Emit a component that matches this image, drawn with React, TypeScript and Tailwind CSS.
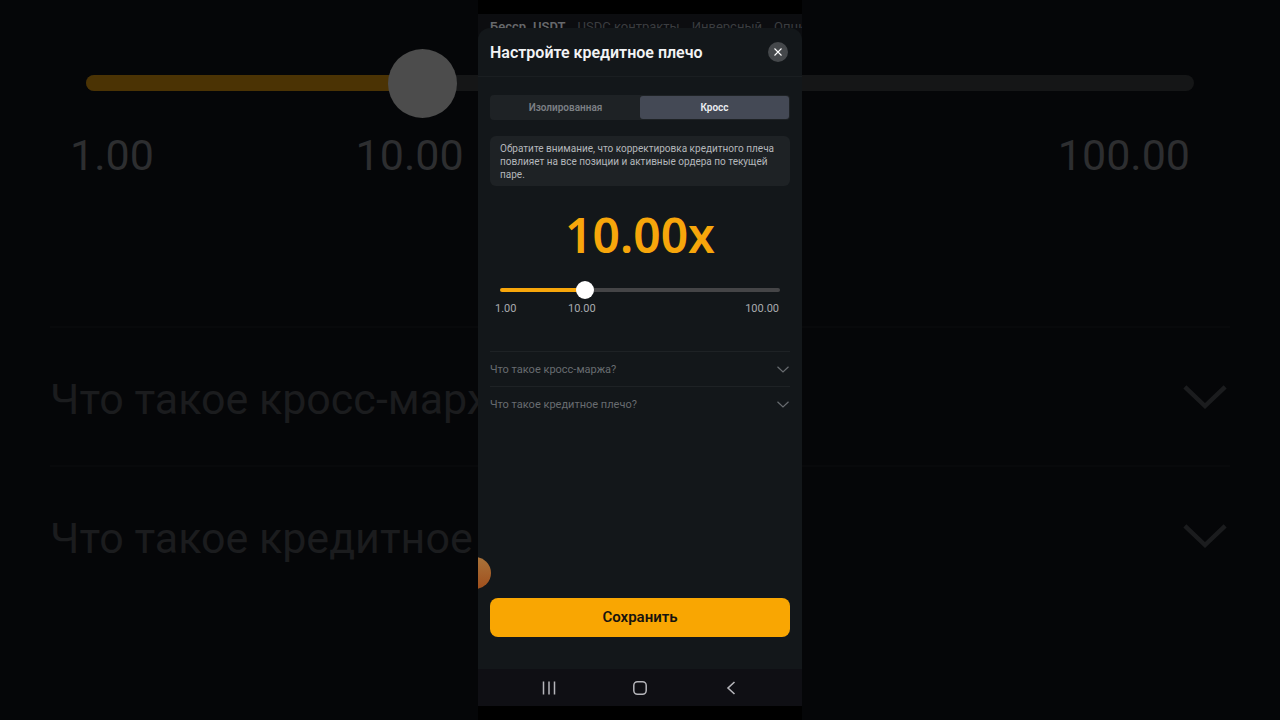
import { useState } from "react";

const FAQ = ["Что такое кросс-маржа?", "Что такое кредитное плечо?"];
const TABS = ["USDC контракты", "Инверсный", "Опционы"];
const THUMB = 18;

function Chevron({ className }: { className: string }) {
  return (
    <svg viewBox="0 0 12 7" fill="none" stroke="currentColor" strokeWidth="1.2" className={className} aria-hidden="true">
      <path d="M0.5 0.8 6 6 11.5 0.8" />
    </svg>
  );
}

function Backdrop() {
  return (
    <div aria-hidden="true" className="absolute inset-0 overflow-hidden bg-[#050608] px-[50px] pt-12">
      <div className="flex h-[70px] items-center pr-9 pl-9">
        <div className="flex h-4 w-full items-center rounded-full bg-[#151617]">
          <div className="h-4 w-[28%] rounded-l-full bg-[#4b3304]" />
          <div className="-ml-2 size-[69px] shrink-0 rounded-full bg-[#4c4c4c]" />
        </div>
      </div>
      <div className="mt-3 flex pr-10 pl-5 text-[43px] leading-[50px] text-[#2d2e30]">
        <span className="w-[25.5%]">1.00</span>
        <span>10.00</span>
        <span className="ml-auto">100.00</span>
      </div>
      <div className="mt-[146px]">
        {FAQ.map((question) => (
          <div key={question} className="flex h-[139px] items-center justify-between border-t-2 border-[#08090b] pt-1 text-[#1b1c1e]">
            <span className="text-[43px] leading-[56px]">{question}</span>
            <Chevron className="mr-[3px] mb-1 w-11" />
          </div>
        ))}
      </div>
    </div>
  );
}

export default function App() {
  const [mode, setMode] = useState("cross");
  const [position, setPosition] = useState(29);
  const fill = `calc(${position}% + ${THUMB / 2 - (THUMB * position) / 100}px)`;

  const segment = (active: boolean) =>
    active
      ? "flex-1 rounded-[3px] bg-[#444955] text-[#eceef2]"
      : "flex-1 rounded-[3px] text-[#7b7f84]";

  return (
    <div className="relative flex min-h-screen justify-center bg-[#050608] font-[Roboto,sans-serif]">
      <Backdrop />
      <main className="relative flex w-full max-w-[324px] flex-col overflow-hidden bg-[#0c0d10]">
        <div className="h-3.5 bg-black" />
        <nav className="flex h-3.5 gap-3 overflow-hidden pt-1 pl-3 text-[13px] leading-[18px] whitespace-nowrap text-[#3b3d40]">
          <a href="#usdt" className="font-semibold text-[#66686b]">Бесср. USDT</a>
          {TABS.map((tab) => (
            <a key={tab} href="#contracts">{tab}</a>
          ))}
        </nav>

        <section aria-labelledby="sheet-title" className="flex flex-1 flex-col rounded-t-xl bg-[#13171a]">
          <header className="flex h-[49px] items-center justify-between border-b border-[#1a1e21] px-3">
            <h1 id="sheet-title" className="pt-0.5 text-base font-semibold text-[#f2f3f5]">Настройте кредитное плечо</h1>
            <button type="button" aria-label="Закрыть" className="mr-0.5 flex size-5 items-center justify-center rounded-full bg-[#45484b] text-white">
              <svg viewBox="0 0 8 8" className="size-2" fill="none" stroke="currentColor" strokeWidth="1.1" aria-hidden="true">
                <path d="M0.5 0.5 7.5 7.5M7.5 0.5 0.5 7.5" />
              </svg>
            </button>
          </header>

          <div className="flex flex-1 flex-col px-3 pt-[18px]">
            <div className="flex h-[25px] rounded-sm bg-[#1e2225] p-px text-[10px] font-semibold">
              <button type="button" aria-pressed={mode === "isolated"} onClick={() => setMode("isolated")} className={segment(mode === "isolated")}>
                Изолированная
              </button>
              <button type="button" aria-pressed={mode === "cross"} onClick={() => setMode("cross")} className={segment(mode === "cross")}>
                Кросс
              </button>
            </div>

            <p className="mt-4 rounded-md bg-[#1e2225] px-2.5 pt-[6px] pb-[5px] text-[10px] leading-[13px] font-normal text-[#b4b7bb]">
              Обратите внимание, что корректировка кредитного плеча повлияет на все позиции и активные ордера по текущей паре.
            </p>

            <output htmlFor="leverage" className="mt-4 text-center font-['Noto_Sans',sans-serif] text-5xl leading-[66px] font-semibold text-[#f7a60b]">10.00x</output>

            <div className="mt-5 flex px-2.5">
              <input
                id="leverage"
                type="range"
                aria-label="Кредитное плечо"
                aria-valuetext="10.00x"
                min={0}
                max={100}
                value={position}
                onChange={(event) => setPosition(Number(event.target.value))}
                style={{ backgroundImage: `linear-gradient(to right, #f7a60b ${fill}, #454547 ${fill})` }}
                className="h-1 w-full appearance-none rounded-full [&::-webkit-slider-thumb]:size-[18px] [&::-webkit-slider-thumb]:appearance-none [&::-webkit-slider-thumb]:rounded-full [&::-webkit-slider-thumb]:bg-white"
              />
            </div>
            <div className="mt-2 flex pr-[11px] pl-[5px] text-[11px] leading-[18px] text-[#a9abae]">
              <span className="w-[73px]">1.00</span>
              <span>10.00</span>
              <span className="ml-auto">100.00</span>
            </div>

            <div className="mt-[33px]">
              {FAQ.map((question) => (
                <button key={question} type="button" className="flex h-[35px] w-full items-center justify-between border-t border-[#1e2225] pt-[3px] text-[11px] text-[#686c70]">
                  {question}
                  <Chevron className="mr-px mb-[3px] w-3" />
                </button>
              ))}
            </div>

            <button type="button" className="mt-auto mb-8 h-[39px] rounded-lg bg-[#f9a602] text-[15px] font-semibold text-[#17140f]">
              Сохранить
            </button>
          </div>
        </section>

        <div className="flex h-[37px] items-center justify-between bg-[#0f0f14] px-16 text-[#b5b5ba]">
          <button type="button" aria-label="Недавние приложения">
            <svg viewBox="0 0 14 14" className="size-3.5" fill="none" stroke="currentColor" strokeWidth="1.5" aria-hidden="true">
              <path d="M1.5 0.5v13M7 0.5v13M12.5 0.5v13" />
            </svg>
          </button>
          <button type="button" aria-label="Главный экран">
            <svg viewBox="0 0 14 14" className="size-3.5" fill="none" stroke="currentColor" strokeWidth="1.5" aria-hidden="true">
              <rect x="0.8" y="0.8" width="12.4" height="12.4" rx="3.6" />
            </svg>
          </button>
          <button type="button" aria-label="Назад">
            <svg viewBox="0 0 14 14" className="size-3.5" fill="none" stroke="currentColor" strokeWidth="1.6" aria-hidden="true">
              <path d="M10.5 1 4 7l6.500 6" />
            </svg>
          </button>
        </div>
        <div className="h-3.5 bg-black" />

        <button type="button" aria-label="Запись экрана" className="absolute bottom-[131px] -left-[19px] size-8 rounded-full bg-linear-to-b from-[#a9733a] to-[#a04f1c]" />
      </main>
    </div>
  );
}
